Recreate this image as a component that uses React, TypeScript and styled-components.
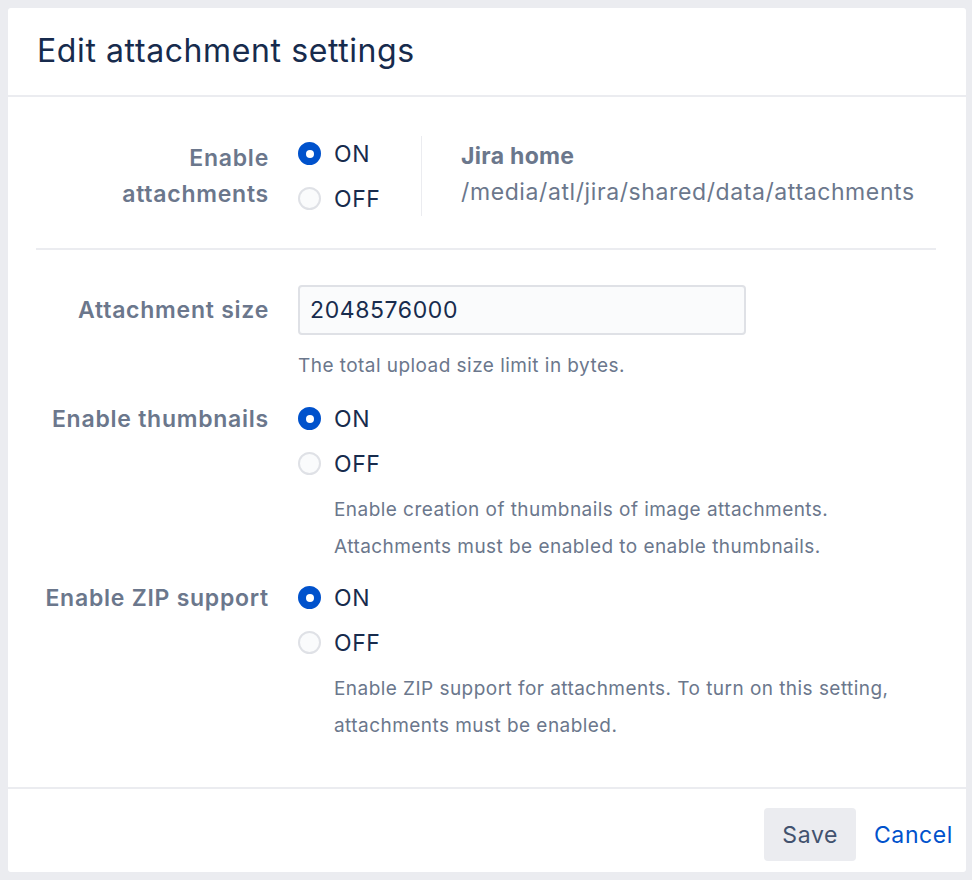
import React from 'react';
import styled, { createGlobalStyle } from 'styled-components';

const GlobalStyle = createGlobalStyle`
	html, body {
		margin: 0;
		padding: 0;
		background: #ebecf0;
	}
	body {
		font-family: Inter, 'Noto Sans', 'Liberation Sans', sans-serif;
		color: #172b4d;
		-webkit-font-smoothing: antialiased;
	}
	* {
		box-sizing: border-box;
	}
`;

const Page = styled.div`
	width: 972px;
	height: 880px;
	padding: 8px 6px 8px 8px;
`;

const Dialog = styled.section`
	display: flex;
	flex-direction: column;
	width: 958px;
	height: 864px;
	background: #ffffff;
	border-radius: 3px;
`;

const Header = styled.header`
	display: flex;
	align-items: center;
	height: 89px;
	padding: 0 29px 2px;
	border-bottom: 2px solid #ebecf0;
`;

const Title = styled.h1`
	margin: 0;
	font-size: 32px;
	font-weight: 400;
	color: #172b4d;
	letter-spacing: 0.6px;
`;

const Body = styled.div`
	flex: 1;
	padding: 34px 30px 0 28px;
`;

const Field = styled.div<{ $center?: boolean; $gap?: number }>`
	display: grid;
	grid-template-columns: 233px 1fr;
	column-gap: 29px;
	align-items: ${(p) => (p.$center ? 'center' : 'start')};
	margin-top: ${(p) => p.$gap ?? 0}px;
`;

const Label = styled.label<{ $pad?: boolean }>`
	text-align: right;
	font-size: 23px;
	line-height: 36px;
	font-weight: 600;
	letter-spacing: 0.75px;
	color: #6b778c;
	padding-top: ${(p) => (p.$pad ? '4.5px' : '0')};
`;

const Controls = styled.div`
	display: flex;
	flex-direction: column;
`;

const Split = styled.div`
	display: flex;
	align-items: center;
`;

const RadioGroup = styled.div`
	display: flex;
	flex-direction: column;
	width: 123px;
`;

const RadioItem = styled.div`
	display: flex;
	align-items: center;
	gap: 13px;
	height: 45px;
	font-size: 23px;
	letter-spacing: 0.6px;
	color: #172b4d;
`;

const RadioDot = styled.span<{ $checked?: boolean }>`
	display: inline-flex;
	align-items: center;
	justify-content: center;
	width: 23px;
	height: 23px;
	border-radius: 50%;
	background: ${(p) => (p.$checked ? '#0052cc' : '#fafbfc')};
	border: 2px solid ${(p) => (p.$checked ? '#0052cc' : '#dfe1e6')};

	&::after {
		content: '';
		display: ${(p) => (p.$checked ? 'block' : 'none')};
		width: 8px;
		height: 8px;
		border-radius: 50%;
		background: #ffffff;
	}
`;

const HomeInfo = styled.div`
	border-left: 1px solid #ebecf0;
	padding: 2px 0 6px 39px;
	font-size: 23px;
	line-height: 36px;
	letter-spacing: 0.6px;
	color: #6b778c;
`;

const HomeTitle = styled.div`
	font-weight: 700;
	letter-spacing: 0.3px;
`;

const Divider = styled.hr`
	margin: 27px 0 35px 0;
	border: none;
	border-top: 2px solid #ebecf0;
`;

const TextInput = styled.input`
	width: 448px;
	height: 50px;
	padding: 0 10px;
	border: 2px solid #dfe1e6;
	border-radius: 4px;
	background: #fafbfc;
	font-family: inherit;
	font-size: 23px;
	letter-spacing: 0.6px;
	color: #172b4d;
	outline: none;
`;

const Help = styled.p<{ $indent?: boolean }>`
	margin: ${(p) => (p.$indent ? '5px 0 0 36px' : '12px 0 0 0')};
	font-size: 19px;
	line-height: 37px;
	letter-spacing: 0.45px;
	color: #6b778c;
`;

const Footer = styled.footer`
	display: flex;
	justify-content: flex-end;
	align-items: center;
	gap: 18px;
	padding: 19px 13px 11px;
	border-top: 2px solid #ebecf0;
`;

const SaveButton = styled.button`
	height: 53px;
	padding: 0 18px;
	border: none;
	border-radius: 4px;
	background: #ebecf0;
	font-family: inherit;
	font-size: 23px;
	letter-spacing: 0.6px;
	color: #42526e;
	cursor: pointer;
`;

const LinkButton = styled.button`
	padding: 0;
	border: none;
	background: transparent;
	font-family: inherit;
	font-size: 23px;
	letter-spacing: 0.6px;
	color: #0052cc;
	cursor: pointer;
`;

function Radios({ on }: { on: boolean }) {
	return (
		<RadioGroup>
			<RadioItem>
				<RadioDot $checked={on} />
				ON
			</RadioItem>
			<RadioItem>
				<RadioDot $checked={!on} />
				OFF
			</RadioItem>
		</RadioGroup>
	);
}

export default function App() {
	return (
		<Page>
			<GlobalStyle />
			<Dialog>
				<Header>
					<Title>Edit attachment settings</Title>
				</Header>
				<Body>
					<Field $center>
						<Label>
							Enable
							<br />
							attachments
						</Label>
						<Split>
							<Radios on />
							<HomeInfo>
								<HomeTitle>Jira home</HomeTitle>
								<div>/media/atl/jira/shared/data/attachments</div>
							</HomeInfo>
						</Split>
					</Field>
					<Divider />
					<Field $center>
						<Label>Attachment size</Label>
						<TextInput defaultValue="2048576000" />
					</Field>
					<Field>
						<span />
						<Help>The total upload size limit in bytes.</Help>
					</Field>
					<Field $gap={12}>
						<Label $pad>Enable thumbnails</Label>
						<Controls>
							<Radios on />
							<Help $indent>
								Enable creation of thumbnails of image attachments.
								<br />
								Attachments must be enabled to enable thumbnails.
							</Help>
						</Controls>
					</Field>
					<Field $gap={10}>
						<Label $pad>Enable ZIP support</Label>
						<Controls>
							<Radios on />
							<Help $indent>
								Enable ZIP support for attachments. To turn on this setting,
								<br />
								attachments must be enabled.
							</Help>
						</Controls>
					</Field>
				</Body>
				<Footer>
					<SaveButton>Save</SaveButton>
					<LinkButton>Cancel</LinkButton>
				</Footer>
			</Dialog>
		</Page>
	);
}
